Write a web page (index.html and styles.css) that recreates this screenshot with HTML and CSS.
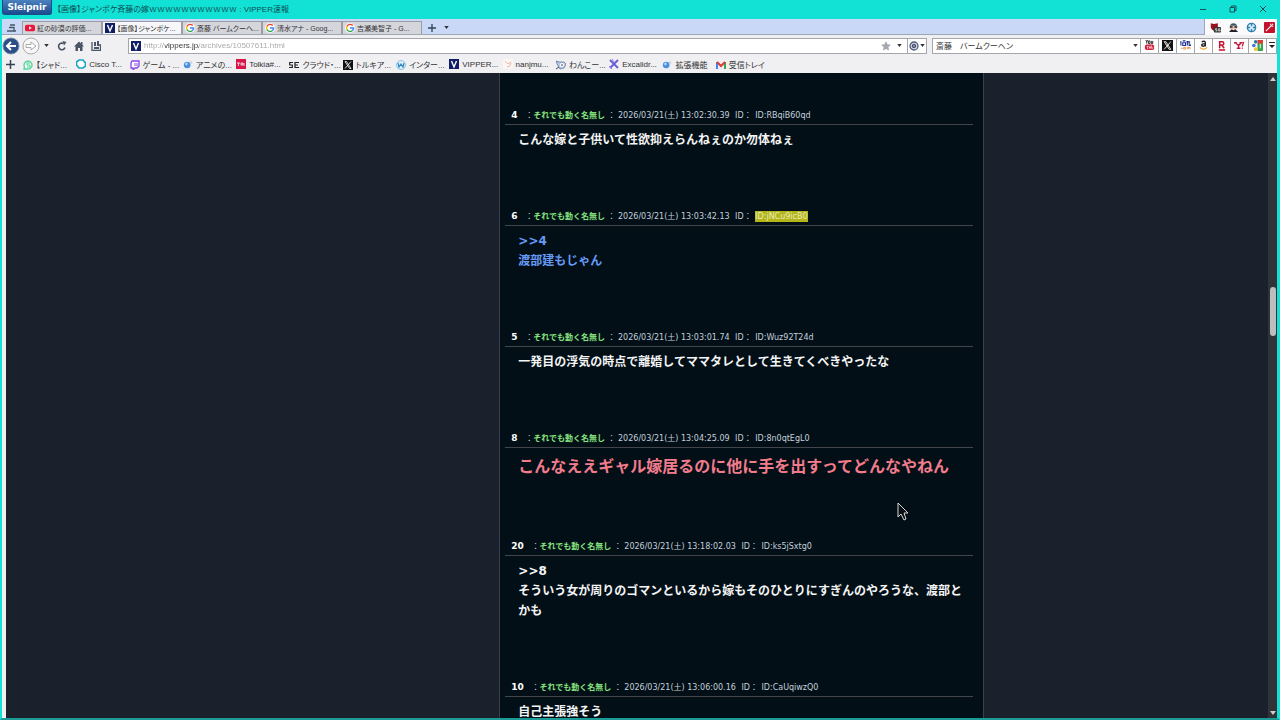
FILE: index.html
```html
<!DOCTYPE html>
<html lang="ja">
<head>
  <meta charset="UTF-8">
  <title>【画像】ジャンポケ斉藤の嫁ｗｗｗｗｗｗｗｗｗｗｗ : VIPPER速報</title>
  <meta name="viewport" content="width=device-width, initial-scale=1.0">
  <link rel="stylesheet" href="styles.css">
</head>
<body>
  <!-- shared icons -->
  <svg class="defs" aria-hidden="true">
    <symbol id="google" viewBox="0 0 18 18">
      <circle cx="9" cy="9" r="9" fill="#fff"/>
      <path d="M14 4.500A6.500 6.500 0 0 0 3.500 6" fill="none" stroke="#ea4335" stroke-width="2.600"/>
      <path d="M3.500 6a6.500 6.500 0 0 0 0 6" fill="none" stroke="#fbbc05" stroke-width="2.600"/>
      <path d="M3.500 12A6.500 6.500 0 0 0 13 14" fill="none" stroke="#34a853" stroke-width="2.600"/>
      <path d="M9 9h6.500a6.500 6.500 0 0 1-2.500 5" fill="none" stroke="#4285f4" stroke-width="2.600"/>
    </symbol>
    <symbol id="vip" viewBox="0 0 10 10">
      <rect width="10" height="10" fill="#0f1c66"/>
      <path d="M2.500 2 5 8l2.500-6" fill="none" stroke="#fff" stroke-width="1.400"/>
    </symbol>
    <symbol id="xlogo" viewBox="0 0 10 10">
      <rect width="10" height="10" fill="#111"/>
      <path d="M2 1.500h1.500l4.500 7H6.500zM8 1.500l-6 7" fill="none" stroke="#fff" stroke-width=".8"/>
    </symbol>
    <symbol id="globe" viewBox="0 0 12 12">
      <circle cx="5" cy="6" r="4" fill="#4b8fe0"/>
      <path d="M2.500 4.500C4 2 6 3 5.500 5S3 7 2.500 4.500z" fill="#b7dbff"/>
      <path d="M8 1l3 1v3l-2-1z" fill="#ccd3dc"/>
    </symbol>
    <symbol id="down" viewBox="0 0 6 4"><path d="M0 0h6L3 4z" fill="currentColor"/></symbol>
  </svg>

  <div class="window">
    <header class="titlebar">
      <button class="brand">Sleipnir</button>
      <h1>【画像】ジャンポケ斉藤の嫁ｗｗｗｗｗｗｗｗｗｗｗ : VIPPER速報</h1>
      <div class="window-buttons">
        <button aria-label="最小化"><svg viewBox="0 0 8 8"><path d="M1 4.500h6"/></svg></button>
        <button aria-label="元に戻す"><svg viewBox="0 0 8 8"><path d="M1 2.500h4.500V7H1zM2.500 2.500V1H7v4.500H5.500"/></svg></button>
        <button aria-label="閉じる"><svg viewBox="0 0 8 8"><path d="M1 1l6 6M7 1 1 7"/></svg></button>
      </div>
    </header>

    <div class="tabs-row">
      <nav class="tabs" aria-label="タブ">
        <button class="tab-menu" aria-label="タブ一覧"><svg viewBox="0 0 10 8"><path d="M3 1h5M2 3.500h5v3M0 7h9" fill="none" stroke="#456" stroke-width="1.300"/></svg></button>
        <button class="tab">
          <svg viewBox="0 0 12 10"><rect y="1" width="12" height="8" rx="2" fill="#e9173c"/><path d="M5 3l3 2-3 2z" fill="#fff"/></svg>
          <span>紅の砂漠の評価...</span>
        </button>
        <button class="tab active"><svg><use href="#vip"/></svg><span>【画像】ジャンポケ...</span></button>
        <button class="tab"><svg><use href="#google"/></svg><span>斎藤 バームクーヘ...</span></button>
        <button class="tab"><svg><use href="#google"/></svg><span>清水アナ - Goog...</span></button>
        <button class="tab"><svg><use href="#google"/></svg><span>吉瀬美智子 - G...</span></button>
        <button class="new-tab" aria-label="新しいタブ"><svg viewBox="0 0 9 9"><path d="M4.500 0v9M0 4.500h9" stroke="#345" stroke-width="1.500"/></svg></button>
        <button class="caret" aria-label="タブメニュー"><svg><use href="#down"/></svg></button>
      </nav>
      <div class="extensions">
        <button aria-label="広告ブロック"><svg viewBox="0 0 14 13"><path d="M1 1l4 1 5-1v5c0 3-3 5-4 5S1 9 1 6z" fill="#9c101c"/><rect x="5" y="6" width="9" height="7" rx="1" fill="#333"/><path d="M9 8H7v1.500h2V11H7M13 8h-2v3h2V9.500h-2" fill="none" stroke="#fff" stroke-width=".8"/></svg></button>
        <button aria-label="エージェント"><svg viewBox="0 0 12 12"><path d="M2 5c0-5 8-5 8 0z" fill="#345a68"/><rect x="2" y="4" width="8" height="4" fill="#e8c3b5"/><path d="M2 5.500h3M7 5.500h3" stroke="#222" stroke-width="1.500"/><path d="M1 11l3-3 2 1 2-1 3 3z" fill="#222"/></svg></button>
        <button aria-label="移動"><svg viewBox="0 0 12 12"><circle cx="6" cy="6" r="4.500" fill="#d8f1fb" stroke="#2e7fae" stroke-width="1.500"/><path d="M6 2v2.500M6 7.500V10M2 6h2.500M7.500 6H10" stroke="#2e7fae" stroke-width="1.500"/></svg></button>
        <button aria-label="ツール"><svg viewBox="0 0 12 12"><rect width="12" height="12" rx="1" fill="#c3122b"/><path d="M2 10l6-6M7 2l1 2 2 1M9 2l1 1" stroke="#fff" stroke-width="1.200" fill="none"/></svg></button>
      </div>
    </div>

    <div class="toolbar">
      <div class="nav-buttons">
        <button class="round back" aria-label="戻る"><svg viewBox="0 0 18 18"><circle cx="9" cy="9" r="8" fill="#294f86" stroke="#7c8da9"/><path d="M14 9H5M9 5 5 9l4 4" fill="none" stroke="#fff" stroke-width="2"/></svg></button>
        <button class="round" aria-label="進む"><svg viewBox="0 0 18 18"><circle cx="9" cy="9" r="8" fill="#f7f7f7" stroke="#aaa"/><path d="M4 7.500h5V5l5 4-5 4v-2.500H4z" fill="#fff" stroke="#aaa"/></svg></button>
        <button class="caret" aria-label="履歴"><svg><use href="#down"/></svg></button>
        <button aria-label="更新"><svg viewBox="0 0 10 10"><path d="M8 6.500A3.300 3.300 0 1 1 6.500 2.500" fill="none" stroke="#4b5566" stroke-width="1.600"/><path d="M5.500 0 9.500 1 7 4.500z" fill="#4b5566"/></svg></button>
        <button aria-label="ホーム"><svg viewBox="0 0 10 10"><path d="M0 5.500 5 .5l2 2V1h1.500v3L10 5.500H8.500V10H6V7H4v3H1.500V5.500z" fill="#4b5566"/></svg></button>
        <button aria-label="保存"><svg viewBox="0 0 10 10"><path d="M1 1v8.500h8.500V4H8" fill="none" stroke="#4b5566" stroke-width="1.300"/><path d="M3 1h2v4H3zM6 0h2v5H6zM3 6h5v2H3z" fill="#4b5566"/></svg></button>
      </div>
      <div class="address">
        <svg class="site-icon"><use href="#vip"/></svg>
        <input class="url" type="text" aria-label="アドレス" value="http://vippers.jp/archives/10507611.html">
        <button aria-label="お気に入り"><svg viewBox="0 0 10 10"><path d="M5 0l1.500 3.300 3.500.4-2.600 2.400.7 3.500L5 7.900 1.900 9.600l.7-3.500L0 3.700l3.500-.4z" fill="#a6a8b0"/></svg></button>
        <button class="caret" aria-label="アドレス履歴"><svg><use href="#down"/></svg></button>
        <button class="engine" aria-label="エンジン切替">
          <svg viewBox="0 0 10 10"><circle cx="5" cy="5" r="4" fill="#d6e1f7" stroke="#555b79" stroke-width="1.300"/><circle cx="5" cy="5" r="1.800" fill="#7d88b0" stroke="#445"/></svg>
          <svg class="small"><use href="#down"/></svg>
        </button>
      </div>
      <div class="search">
        <input type="text" aria-label="検索" value="斎藤　バームクーヘン">
        <button class="caret" aria-label="検索履歴"><svg><use href="#down"/></svg></button>
        <button class="site" aria-label="YouTube"><svg viewBox="0 0 12 12"><path d="M2 0l1 2v2M4 0 3 2M5 1h1.500v3H5zM8 1v3h1.500V1" fill="none" stroke="#222"/><rect x="1" y="5" width="10" height="6" rx="2" fill="#d0223c"/><path d="M3 7h2M4 7v3M6 7v2h1V7M8 6v3h1.500V8" fill="none" stroke="#fff" stroke-width=".7"/></svg></button>
        <button class="site" aria-label="X"><svg><use href="#xlogo"/></svg></button>
        <button class="site" aria-label="価格.com"><svg viewBox="0 0 12 12"><path d="M1 1v5M3 1h3M3 3h3v3H3zM8 1v5M7 2h4M10 2v4h2V4" fill="none" stroke="#1c2f94" stroke-width="1.200"/><path d="M1 9h2M4 8h2v2H4zM8 10V8h3v2M9.500 8v2" fill="none" stroke="#e2914b"/></svg></button>
        <button class="site" aria-label="Amazon"><svg viewBox="0 0 12 12"><path d="M4 2c2-1 4-1 4 1v4M8 4C5 4 4 4 4 5.500S7 7.500 8 5" fill="none" stroke="#222" stroke-width="1.500"/><path d="M2 8c3 3 6 2 8 0" fill="none" stroke="#f2a01e" stroke-width="1.200"/></svg></button>
        <button class="site" aria-label="楽天"><svg viewBox="0 0 12 12"><path d="M4 9V2h3c2 0 2 3.500 0 3.500H4M6 5.500 9 9M3 11h7" fill="none" stroke="#c0122d" stroke-width="1.600"/></svg></button>
        <button class="site" aria-label="Yahoo"><svg viewBox="0 0 12 12"><path d="M0 3h3M1.500 3 5 6l3-3H6M5 6v3M3 9h4M10.500 2 9 7M8.500 9h1" fill="none" stroke="#c4183a" stroke-width="1.500"/></svg></button>
        <button class="site" aria-label="マップ"><svg viewBox="0 0 12 12"><rect x="6" y="0" width="6" height="5" fill="#df3c31"/><rect x="6" y="4" width="6" height="8" fill="#36a652"/><circle cx="4" cy="2" r="2" fill="#287b9c"/><circle cx="2" cy="6" r="2" fill="#3e78dd"/><circle cx="4" cy="10" r="2" fill="#f3c533"/><path d="M9 4v5" stroke="#fff"/></svg></button>
        <button class="more" aria-label="その他"><svg viewBox="0 0 6 7"><path d="M0 .5h6" stroke="#222"/><path d="M0 3h6L3 6z" fill="#222"/></svg></button>
      </div>
    </div>

    <nav class="bookmarks" aria-label="お気に入り">
      <button aria-label="追加"><svg viewBox="0 0 9 9"><path d="M4.500 0v9M0 4.500h9" stroke="#345" stroke-width="1.500"/></svg></button>
      <ul>
        <li><a href="#"><svg viewBox="0 0 10 10"><path d="M1 9l.5-2A4 4 0 1 1 4 9z" fill="#effff6" stroke="#55d09a" stroke-width="1.300"/><path d="M7 3H4v2h3v2H4" fill="none" stroke="#55d09a"/></svg>【シャド...</a></li>
        <li><a href="#"><svg viewBox="0 0 10 10"><path d="M3 1h4l2.500 3v3L7 9H3L.5 6V3z" fill="#fff" stroke="#19a5c4" stroke-width="1.700"/></svg>Cisco T...</a></li>
        <li><a href="#"><svg viewBox="0 0 10 10"><path d="M2 1h7v5L7 8H5L3 10V8H1V3z" fill="#fff" stroke="#8a46e8" stroke-width="1.300"/><path d="M5 3v3M7 3v3" stroke="#8a46e8"/></svg>ゲーム - ...</a></li>
        <li><a href="#"><svg><use href="#globe"/></svg>アニメの...</a></li>
        <li><a href="#"><svg viewBox="0 0 10 10"><rect width="10" height="10" fill="#d71748"/><path d="M1 4h3M2.500 4v3M5 4h2v2H5zM8 4v3" fill="none" stroke="#fff" stroke-width=".8"/></svg>Tolkia#...</a></li>
        <li><a href="#"><svg viewBox="0 0 10 10"><path d="M4 2.500H.7v2.500h2.600v2.500H0M10 2.500H6v5h4M6 5h3" fill="none" stroke="#222" stroke-width="1.200"/></svg>クラウド・...</a></li>
        <li><a href="#"><svg><use href="#xlogo"/></svg>トルキア...</a></li>
        <li><a href="#"><svg viewBox="0 0 10 10"><circle cx="5" cy="5" r="4.500" fill="#d9effa" stroke="#8bc4e8"/><path d="M2 3l1 4 2-3 2 3 1-4" fill="none" stroke="#3684bd" stroke-width="1.200"/></svg>インター...</a></li>
        <li><a href="#"><svg><use href="#vip"/></svg>VIPPER...</a></li>
        <li><a href="#"><svg viewBox="0 0 10 10"><rect width="10" height="10" fill="#fbf6f4"/><path d="M2 2l3 3 3-2-1 4-3 1" fill="none" stroke="#e9b9ad"/></svg>nanjmu...</a></li>
        <li><a href="#"><svg viewBox="0 0 10 10"><path d="M0 1l3 1h5l2 2-2 4-4 1-2-3z" fill="#b9cbe8" stroke="#627899" stroke-width=".8"/><circle cx="6" cy="5" r="2" fill="#fff"/><path d="M5 5h2M0 9l3-2" stroke="#446"/></svg>わんこー...</a></li>
        <li><a href="#"><svg viewBox="0 0 10 10"><path d="M1 1l8 8M9 1 1 9" stroke="#685bd1" stroke-width="1.800"/><path d="M3 0l3 4M0 7l3 3" stroke="#8d83ee"/></svg>Excalidr...</a></li>
        <li><a href="#"><svg><use href="#globe"/></svg>拡張機能</a></li>
        <li><a href="#"><svg viewBox="0 0 10 10"><path d="M1 9V2" stroke="#4285f4" stroke-width="2"/><path d="M9 9V2" stroke="#34a853" stroke-width="2"/><path d="M1 2l4 4 4-4" fill="none" stroke="#df3b32" stroke-width="2"/></svg>受信トレイ</a></li>
      </ul>
    </nav>

    <div class="viewport">
      <main class="page">
        <div class="column">
          <article class="post">
            <p class="meta"><b>4</b> ：<span class="name">それでも動く名無し</span> ： <time>2026/03/21(土) 13:02:30.39</time> ID： <span class="id">ID:RBqiB60qd</span></p>
            <p class="body">こんな嫁と子供いて性欲抑えらんねぇのか勿体ねぇ</p>
          </article>
          <article class="post">
            <p class="meta"><b>6</b> ：<span class="name">それでも動く名無し</span> ： <time>2026/03/21(土) 13:03:42.13</time> ID： <span class="id marked">ID:jNCu9icB0</span></p>
            <p class="body blue">&gt;&gt;4<br>渡部建もじゃん</p>
          </article>
          <article class="post">
            <p class="meta"><b>5</b> ：<span class="name">それでも動く名無し</span> ： <time>2026/03/21(土) 13:03:01.74</time> ID： <span class="id">ID:Wuz92T24d</span></p>
            <p class="body">一発目の浮気の時点で離婚してママタレとして生きてくべきやったな</p>
          </article>
          <article class="post">
            <p class="meta"><b>8</b> ：<span class="name">それでも動く名無し</span> ： <time>2026/03/21(土) 13:04:25.09</time> ID： <span class="id">ID:8n0qtEgL0</span></p>
            <p class="body large">こんなええギャル嫁居るのに他に手を出すってどんなやねん</p>
          </article>
          <article class="post">
            <p class="meta"><b>20</b> ：<span class="name">それでも動く名無し</span> ： <time>2026/03/21(土) 13:18:02.03</time> ID： <span class="id">ID:ks5jSxtg0</span></p>
            <p class="body">&gt;&gt;8<br>そういう女が周りのゴマンといるから嫁もそのひとりにすぎんのやろうな、渡部とかも</p>
          </article>
          <article class="post">
            <p class="meta"><b>10</b> ：<span class="name">それでも動く名無し</span> ： <time>2026/03/21(土) 13:06:00.16</time> ID： <span class="id">ID:CaUqiwzQ0</span></p>
            <p class="body">自己主張強そう</p>
          </article>
        </div>
      </main>
      <div class="scrollbar">
        <svg viewBox="0 0 6 4"><path d="M0 4h6L3 0z" fill="#ccc"/></svg>
        <div class="track"><div class="thumb"></div></div>
        <svg viewBox="0 0 6 4"><path d="M0 0h6L3 4z" fill="#ccc"/></svg>
      </div>
    </div>
  </div>

  <svg class="cursor" viewBox="0 0 12 19" aria-hidden="true"><path d="M1 1v14l3-3 3 6 2-1-2-6h4z" fill="#0a0f14" stroke="#d8d8d8"/></svg>
</body>
</html>
```
FILE: styles.css
```css
*,
*::before,
*::after {
  box-sizing: border-box;
}
body {
  margin: 0;
  font-family: "Liberation Sans", "Noto Sans CJK JP", sans-serif;
  font-size: 8px;
  color: #333;
  overflow: hidden;
}
button,
input {
  font: inherit;
  color: inherit;
  border: 0;
  padding: 0;
  background: none;
}
button {
  display: flex;
  align-items: center;
  justify-content: center;
}
svg {
  display: block;
  width: 10px;
  height: 10px;
  flex: none;
}
.defs {
  position: absolute;
  width: 0;
  height: 0;
}
.window {
  display: flex;
  flex-direction: column;
  height: 100vh;
  background: #f0eff2;
  border: solid #12e2d6;
  border-width: 0 3px 0 2px;
  border-bottom: 2px solid #1b9a96;
}

/* title bar */
.titlebar {
  display: flex;
  align-items: flex-start;
  height: 19px;
  flex: none;
  background: #12e2d6;
}
.brand {
  width: 50px;
  height: 15px;
  border: 1px solid #1c4b8a;
  border-top: 0;
  border-radius: 0 0 3px 3px;
  background: linear-gradient(#4b82bd, #1b4b91);
  color: #fff;
  font: bold 9px "DejaVu Sans", sans-serif;
}
h1 {
  margin: 0 0 0 5px;
  font-size: 8px;
  font-weight: normal;
  line-height: 19px;
  color: #0d4f55;
  font-feature-settings: "palt";
  white-space: nowrap;
}
.window-buttons {
  display: flex;
  gap: 22px;
  margin-left: auto;
  padding: 5px 10px 0 0;
}
.window-buttons svg {
  width: 8px;
  height: 8px;
  fill: none;
  stroke: #145055;
}

/* tabs */
.tabs-row {
  display: flex;
  height: 16px;
  flex: none;
  background: #fafafc;
}
.tabs {
  display: flex;
  align-items: flex-end;
  flex: 1;
  background: #c9d8f6;
  border: 1px solid #9fa7b5;
  border-width: 0 1px 1px 0;
}
.tab-menu {
  width: 20px;
  height: 13px;
}
.tab {
  width: 80px;
  height: 13px;
  justify-content: flex-start;
  gap: 2px;
  padding: 0 2px;
  background: #d5d6dc;
  border: 1px solid #9a9da6;
  border-bottom: 0;
  font-size: 7px;
  font-feature-settings: "palt";
  white-space: nowrap;
}
.tab.active {
  background: #f7f7fa;
}
.new-tab {
  width: 20px;
  height: 13px;
}
.new-tab svg {
  width: 8px;
  height: 8px;
}
.caret {
  width: 8px;
  height: 13px;
}
.caret svg,
.small {
  width: 5px;
  height: 3px;
}
.extensions {
  display: flex;
  align-items: center;
  gap: 7px;
  padding: 0 2px 0 5px;
}
.extensions svg {
  width: 11px;
  height: 11px;
}

/* address and search */
.toolbar {
  display: flex;
  align-items: center;
  height: 21px;
  flex: none;
  gap: 5px;
}
.nav-buttons {
  display: flex;
  align-items: center;
  gap: 7px;
  width: 121px;
}
.nav-buttons .round {
  margin-right: -5px;
}
.round svg {
  width: 18px;
  height: 18px;
}
.address,
.search {
  display: flex;
  height: 16px;
  align-items: center;
  background: #fff;
  border: 1px solid #a5a5aa;
}
.address {
  flex: 1;
}
.site-icon {
  margin: 0 2px;
}
.url {
  flex: 1;
  min-width: 0;
  height: 14px;
  padding-left: 1px;
  outline: 0;
  /* host name stands out from the rest of the address */
  background: linear-gradient(90deg, #a5a5a5 22px, #333 22px, #333 56px, #a5a5a5 56px);
  -webkit-background-clip: text;
  background-clip: text;
  -webkit-text-fill-color: transparent;
}
.address .caret {
  width: 16px;
}
.engine {
  width: 19px;
  height: 14px;
  gap: 1px;
  border-left: 1px solid #a5a5aa;
}
.search {
  width: 345px;
}
.search input {
  flex: 1;
  min-width: 0;
  padding-left: 3px;
  font-feature-settings: "palt";
}
.search .caret {
  width: 10px;
}
.site {
  width: 18px;
  height: 14px;
  border-left: 1px solid #a5a5aa;
}
.site svg {
  width: 11px;
  height: 11px;
}
.more {
  width: 10px;
  height: 14px;
  border-left: 1px solid #a5a5aa;
}
.more svg {
  width: 6px;
  height: 7px;
}

/* bookmarks */
.bookmarks {
  display: flex;
  align-items: center;
  height: 17px;
  flex: none;
  padding-left: 4px;
  gap: 8px;
}
.bookmarks > button svg {
  width: 9px;
  height: 9px;
}
.bookmarks ul {
  display: grid;
  grid-template-columns: repeat(14, 1fr);
  width: 746px;
  margin: 0;
  padding: 0;
  list-style: none;
}
.bookmarks a {
  display: flex;
  align-items: center;
  gap: 3px;
  color: #333;
  text-decoration: none;
  white-space: nowrap;
  font-feature-settings: "palt";
}

/* page */
.viewport {
  display: flex;
  flex: 1;
  min-height: 0;
  padding-left: 4px;
}
.page {
  display: grid;
  grid-template-columns: 494fr 485px 284fr;
  flex: 1;
  overflow: hidden;
  background: #1b212c;
}
.column {
  grid-column: 2;
  padding: 35px 10px 0 5px;
  background: #020f17;
  border: solid #39404a;
  border-width: 0 1px;
}
.post {
  padding-bottom: 59px;
}
.meta {
  margin: 0;
  padding-left: 6px;
  border-bottom: 1px solid #424549;
  font: 8px/16px "DejaVu Sans", "Noto Sans CJK JP", sans-serif;
  color: #c5d0dc;
  white-space: nowrap;
}
.meta b {
  margin-right: 5px;
  font-size: 9px;
  line-height: 9px;
  color: #fff;
}
.name {
  color: #86e27e;
  font-weight: bold;
}
.meta time {
  margin-right: 3px;
}
.id {
  display: inline-block;
  margin-left: 1px;
  line-height: 11px;
}
.marked {
  background: #b4b519;
  color: #e8ecbc;
}
.body {
  margin: 0;
  padding: 5px 0 0 13px;
  font: bold 12px/20px "DejaVu Sans", "Noto Sans CJK JP", sans-serif;
  color: #f4f4f4;
}
.blue {
  color: #6699f5;
}
.large {
  font-size: 16px;
  line-height: 27px;
  color: #f27c8c;
}
.scrollbar {
  display: flex;
  flex-direction: column;
  align-items: center;
  width: 9px;
  padding: 4px 0 3px;
  background: #303338;
}
.scrollbar svg {
  width: 6px;
  height: 4px;
}
.track {
  display: flex;
  flex-direction: column;
  flex: 1;
}
.track::before {
  content: "";
  flex: 205;
}
.track::after {
  content: "";
  flex: 374;
}
.thumb {
  width: 6px;
  height: 49px;
  border-radius: 3px;
  background: #bdbdbd;
}
.cursor {
  position: absolute;
  left: 897px;
  top: 502px;
  width: 12px;
  height: 19px;
}
```
